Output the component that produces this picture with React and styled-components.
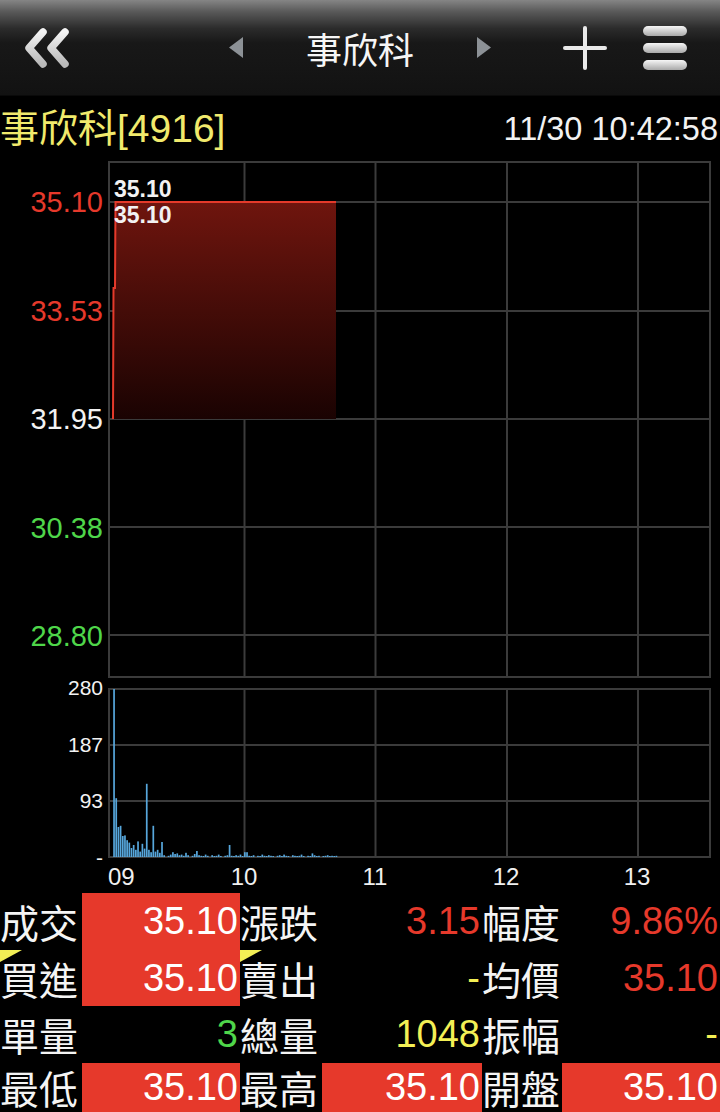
import React from "react";
import styled, { createGlobalStyle } from "styled-components";

const RED = "#e6392b";
const GREEN = "#4fd64a";
const YELLOW = "#f3ef55";
const GRID = "#3b3b3b";

const GlobalStyle = createGlobalStyle`
  html, body {
    margin: 0;
    padding: 0;
    background: #000;
    overflow: hidden;
  }
  body {
    font-family: "Liberation Sans", "Noto Sans CJK TC", sans-serif;
    color: #f4f4f4;
  }
`;

const Page = styled.div`
  width: 720px;
  height: 1112px;
  overflow: hidden;
  background: #000;
`;

const Header = styled.header`
  height: 96px;
  display: grid;
  grid-template-columns: 1fr auto 1fr;
  align-items: center;
  background: linear-gradient(
    #858585 0%,
    #5a5a5a 12%,
    #2b2b2b 30%,
    #181818 45%,
    #121212 100%
  );
  border-bottom: 1px solid #0a0a0a;
  box-sizing: border-box;
`;

const HeaderLeft = styled.div`
  display: flex;
  align-items: center;
  padding-left: 24px;
`;

const HeaderCenter = styled.div`
  display: flex;
  align-items: center;
  gap: 63px;
`;

const HeaderRight = styled.div`
  display: flex;
  align-items: center;
  justify-content: flex-end;
  gap: 35px;
  padding-right: 32px;
`;

const HeaderTitle = styled.h1`
  margin: 0;
  font-family: "Noto Sans CJK TC", sans-serif;
  font-weight: 400;
  font-size: 36px;
  line-height: 40px;
  color: #f6f6f6;
`;

const InfoRow = styled.div`
  height: 65px;
  display: flex;
  align-items: center;
  justify-content: space-between;
  padding-right: 2px;
`;

const StockName = styled.div`
  font-size: 39px;
  color: #f1ea6c;
  line-height: 40px;
`;

const Stamp = styled.div`
  font-size: 32.5px;
  color: #f2f2f2;
  line-height: 40px;
`;

const ChartRow = styled.div`
  display: flex;
  margin-top: ${(p) => p.$gap || 0}px;
`;

const Axis = styled.div`
  width: 108px;
  box-sizing: border-box;
  padding: ${(p) => p.$pad};
  margin: ${(p) => p.$shift || 0}px 0;
  height: ${(p) => p.$height}px;
  display: flex;
  flex-direction: column;
  justify-content: space-between;
  align-items: flex-end;
`;

const AxisLabel = styled.span`
  display: block;
  padding-right: 5px;
  font-size: ${(p) => p.$size}px;
  line-height: ${(p) => p.$lh}px;
  height: ${(p) => p.$lh}px;
  color: ${(p) => p.$color || "#f2f2f2"};
`;

const Plot = styled.svg`
  display: block;
  flex: none;
`;

const TimeAxis = styled.div`
  display: grid;
  grid-template-columns: 108px 70.5px 131px 131px 131px 131px;
  height: 35px;
  align-items: center;
  font-size: 24px;
  color: #f0f0f0;
  padding-top: 2px;
  box-sizing: border-box;
`;

const Tick = styled.span`
  text-align: ${(p) => (p.$start ? "left" : "center")};
`;

const Quote = styled.div`
  display: grid;
  grid-template-columns: 82px 158px 82px 160px 80px 158px;
  grid-template-rows: repeat(3, 56.5px) 50px;
  line-height: 56.5px;

  & > :nth-last-child(-n + 6) {
    line-height: 48px;
  }
`;

const QLabel = styled.div`
  position: relative;
  font-family: "Noto Sans CJK TC", sans-serif;
  font-size: 39px;
  color: #f4f4f4;
  white-space: nowrap;

  &::before {
    content: "";
    display: ${(p) => (p.$flag ? "block" : "none")};
    position: absolute;
    top: 0;
    left: 0;
    width: 0;
    height: 0;
    border-top: 12px solid ${YELLOW};
    border-right: 22px solid transparent;
  }
`;

const QValue = styled.div`
  font-size: 38px;
  text-align: right;
  padding-right: 2px;
  white-space: nowrap;
  color: ${(p) => p.$color || "#fff"};
  background: ${(p) => (p.$hot ? RED : "transparent")};
`;

const BackIcon = () => (
  <svg width="46" height="42" viewBox="0 0 46 42">
    <defs>
      <linearGradient id="chev" x1="0" y1="0" x2="0" y2="1">
        <stop offset="0" stopColor="#f4f4f4" />
        <stop offset="1" stopColor="#b9b9b9" />
      </linearGradient>
    </defs>
    <g
      fill="none"
      stroke="url(#chev)"
      strokeWidth="7.5"
      strokeLinecap="round"
      strokeLinejoin="round"
    >
      <path d="M19 5 L5 21 L19 37" />
      <path d="M41 5 L27 21 L41 37" />
    </g>
  </svg>
);

const Arrow = ({ dir }) => (
  <svg width="14" height="21" viewBox="0 0 14 21">
    <polygon
      points={dir === "left" ? "0,10.5 14,0 14,21" : "14,10.5 0,0 0,21"}
      fill="#8c9196"
    />
  </svg>
);

const PlusIcon = () => (
  <svg width="44" height="44" viewBox="0 0 44 44">
    <g stroke="#e9e9e9" strokeWidth="4" strokeLinecap="round">
      <path d="M22 2 V42" />
      <path d="M2 22 H42" />
    </g>
  </svg>
);

const MenuIcon = () => (
  <svg width="46" height="46" viewBox="0 0 46 46">
    <defs>
      <linearGradient id="bar" x1="0" y1="0" x2="0" y2="1">
        <stop offset="0" stopColor="#f6f6f6" />
        <stop offset="1" stopColor="#a9a9a9" />
      </linearGradient>
    </defs>
    {[1, 18, 35].map((y) => (
      <rect key={y} x="1" y={y} width="44" height="10" rx="5" fill="url(#bar)" />
    ))}
  </svg>
);

const W = 603;
const VX = [136.5, 267.5, 399, 530];

const PriceChart = () => (
  <Plot width={W} height={517} viewBox={`0 0 ${W} 517`}>
    <defs>
      <linearGradient id="fill" x1="0" y1="0" x2="0" y2="1">
        <stop offset="0" stopColor="#6f150e" />
        <stop offset="1" stopColor="#1a0302" />
      </linearGradient>
    </defs>
    <rect x="1" y="1" width={W - 2} height="515" fill="none" stroke={GRID} strokeWidth="2" />
    {[41, 150, 258, 366, 474].map((y) => (
      <line key={y} x1="1" x2={W - 1} y1={y} y2={y} stroke={GRID} strokeWidth="2" />
    ))}
    {VX.map((x) => (
      <line key={x} x1={x} x2={x} y1="1" y2="516" stroke={GRID} strokeWidth="2" />
    ))}
    <path d="M5 258 L5.5 127 L7 127 L7.5 41 L228 41 L228 258 Z" fill="url(#fill)" />
    <path
      d="M5 258 L5.5 127 L7 127 L7.5 41 L228 41"
      fill="none"
      stroke="#e53a2b"
      strokeWidth="2"
    />
    <g fill="#f2f2f2" fontFamily="Liberation Sans, sans-serif" fontWeight="700" fontSize="23">
      <text x="6" y="36">35.10</text>
      <text x="6" y="62">35.10</text>
    </g>
  </Plot>
);

const volumes = [
  280, 98, 50, 52, 35, 36, 28, 24, 15, 20, 12, 26, 9, 22, 14, 122, 12, 8, 52, 9,
  12, 7, 25, 3, 0, 2, 4, 8, 5, 6, 3, 4, 2, 7, 3, 0, 2, 5, 10, 3, 2, 1, 4, 2, 0, 3,
  1, 2, 4, 1, 0, 2, 3, 20, 2, 1, 3, 2, 4, 1, 8, 8, 2, 1, 3, 0, 2, 1, 4, 2, 1, 3, 2,
  1, 0, 2, 3, 1, 4, 2, 1, 0, 3, 2, 1, 2, 4, 1, 0, 2, 1, 6, 3, 1, 2, 0, 1, 2, 3, 1,
  2, 1, 2,
];

const VolumeChart = () => (
  <Plot width={W} height={170} viewBox={`0 0 ${W} 170`}>
    <rect x="1" y="1" width={W - 2} height="168" fill="none" stroke={GRID} strokeWidth="2" />
    {[57, 113].map((y) => (
      <line key={y} x1="1" x2={W - 1} y1={y} y2={y} stroke={GRID} strokeWidth="2" />
    ))}
    {VX.map((x) => (
      <line key={x} x1={x} x2={x} y1="1" y2="169" stroke={GRID} strokeWidth="2" />
    ))}
    {volumes.map((v, i) => {
      const h = (v / 280) * 168;
      if (h <= 0) return null;
      return (
        <rect
          key={i}
          x={5.2 + i * 2.18}
          y={169 - Math.max(h, 1)}
          width="1.7"
          height={Math.max(h, 1)}
          fill="#57a7dc"
        />
      );
    })}
  </Plot>
);

const rows = [
  [
    { label: "成交" },
    { value: "35.10", hot: true },
    { label: "漲跌" },
    { value: "3.15", color: RED },
    { label: "幅度" },
    { value: "9.86%", color: RED },
  ],
  [
    { label: "買進", flag: true },
    { value: "35.10", hot: true },
    { label: "賣出", flag: true },
    { value: "-", color: YELLOW },
    { label: "均價" },
    { value: "35.10", color: RED },
  ],
  [
    { label: "單量" },
    { value: "3", color: GREEN },
    { label: "總量" },
    { value: "1048", color: YELLOW },
    { label: "振幅" },
    { value: "-", color: YELLOW },
  ],
  [
    { label: "最低" },
    { value: "35.10", hot: true },
    { label: "最高" },
    { value: "35.10", hot: true },
    { label: "開盤" },
    { value: "35.10", hot: true },
  ],
];

export default function App() {
  return (
    <Page>
      <GlobalStyle />
      <Header>
        <HeaderLeft>
          <BackIcon />
        </HeaderLeft>
        <HeaderCenter>
          <Arrow dir="left" />
          <HeaderTitle>事欣科</HeaderTitle>
          <Arrow dir="right" />
        </HeaderCenter>
        <HeaderRight>
          <PlusIcon />
          <MenuIcon />
        </HeaderRight>
      </Header>

      <InfoRow>
        <StockName>事欣科[4916]</StockName>
        <Stamp>11/30 10:42:58</Stamp>
      </InfoRow>

      <ChartRow>
        <Axis $pad="26px 0 27px" $height={517}>
          <AxisLabel $size={29} $lh={30} $color={RED}>35.10</AxisLabel>
          <AxisLabel $size={29} $lh={30} $color={RED}>33.53</AxisLabel>
          <AxisLabel $size={29} $lh={30}>31.95</AxisLabel>
          <AxisLabel $size={29} $lh={30} $color={GREEN}>30.38</AxisLabel>
          <AxisLabel $size={29} $lh={30} $color={GREEN}>28.80</AxisLabel>
        </Axis>
        <PriceChart />
      </ChartRow>

      <ChartRow $gap={10}>
        <Axis $pad="0" $shift={-11} $height={192}>
          <AxisLabel $size={21} $lh={22}>280</AxisLabel>
          <AxisLabel $size={21} $lh={22}>187</AxisLabel>
          <AxisLabel $size={21} $lh={22}>93</AxisLabel>
          <AxisLabel $size={21} $lh={22}>-</AxisLabel>
        </Axis>
        <VolumeChart />
      </ChartRow>

      <TimeAxis>
        <span />
        <Tick $start>09</Tick>
        <Tick>10</Tick>
        <Tick>11</Tick>
        <Tick>12</Tick>
        <Tick>13</Tick>
      </TimeAxis>

      <Quote>
        {rows.map((row, r) =>
          row.map((c, i) =>
            c.label ? (
              <QLabel key={`${r}-${i}`} $flag={c.flag}>
                {c.label}
              </QLabel>
            ) : (
              <QValue key={`${r}-${i}`} $hot={c.hot} $color={c.color}>
                {c.value}
              </QValue>
            )
          )
        )}
      </Quote>
    </Page>
  );
}
